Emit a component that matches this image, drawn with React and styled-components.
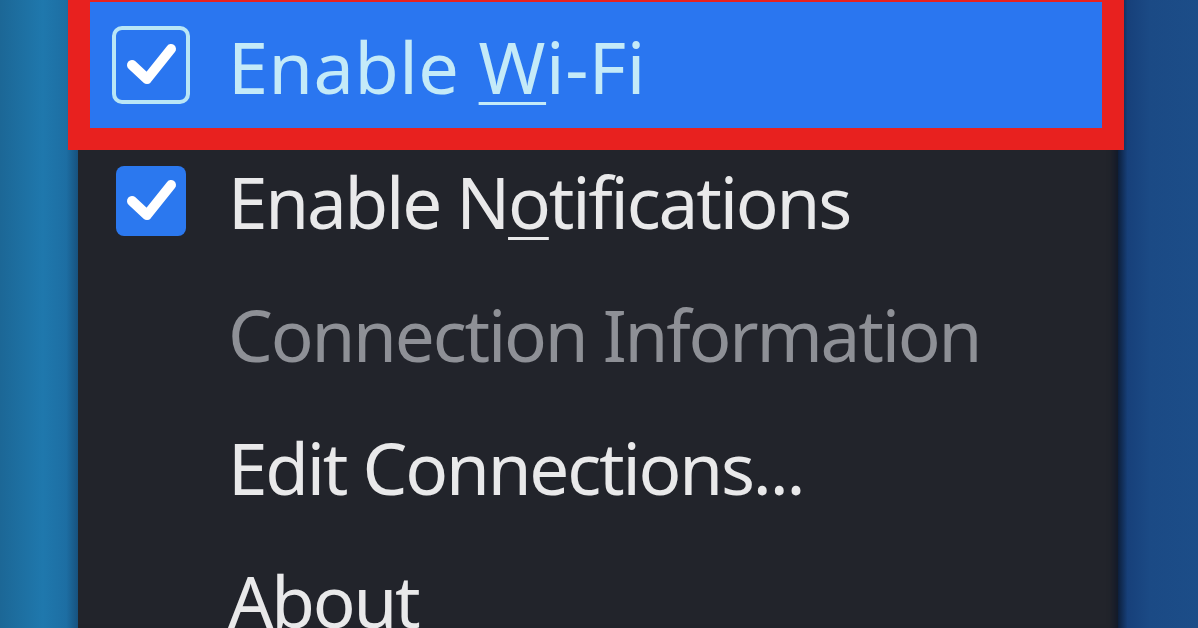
import styled, { createGlobalStyle } from 'styled-components'

const GlobalStyle = createGlobalStyle`
  html, body {
    margin: 0;
    padding: 0;
    background: #1b4a82;
  }
  body {
    font-family: 'Noto Sans', 'DejaVu Sans', sans-serif;
  }
`

const Screen = styled.div`
  display: flex;
  width: 1198px;
  height: 628px;
  overflow: hidden;
`

const Wallpaper = styled.div`
  flex: ${({ grow }) => (grow ? '1 1 0%' : '0 0 auto')};
  width: ${({ width }) => (width ? `${width}px` : 'auto')};
  background: ${({ side }) =>
    side === 'left'
      ? 'linear-gradient(90deg, #1c6796 0%, #1f78ad 55%, #1d6ea3 85%, #17527f 100%)'
      : 'linear-gradient(90deg, #0c1f3c 0%, #17407a 12%, #1b4a85 40%, #1c4d88 100%)'};
`

const Menu = styled.nav`
  position: relative;
  z-index: 1;
  width: 1040px;
  flex: 0 0 auto;
  display: flex;
  flex-direction: column;
  padding-top: 2px;
  background: #22242b;
  box-shadow: inset -8px 0 6px -4px #121a2a;
`

const Item = styled.div`
  display: flex;
  align-items: center;
  gap: 38px;
  flex: 0 0 auto;
  height: ${({ highlighted }) => (highlighted ? '126px' : '133px')};
  margin: ${({ highlighted }) => (highlighted ? '0 16px 6px 12px' : '0 16px 0 12px')};
  padding-left: 22px;
  background: ${({ highlighted }) => (highlighted ? '#2a76f0' : 'transparent')};
  outline: ${({ highlighted }) => (highlighted ? '22px solid #e8211f' : 'none')};
`

const CheckSlot = styled.div`
  width: 78px;
  height: 78px;
  flex: 0 0 auto;
  display: flex;
  align-items: center;
  justify-content: center;
`

const CheckBox = styled.div`
  box-sizing: border-box;
  width: ${({ outlined }) => (outlined ? '78px' : '70px')};
  height: ${({ outlined }) => (outlined ? '78px' : '70px')};
  border-radius: ${({ outlined }) => (outlined ? '10px' : '8px')};
  border: ${({ outlined }) => (outlined ? '4px solid #b9e6f6' : 'none')};
  background: ${({ outlined }) => (outlined ? 'transparent' : '#2b78ef')};
  display: flex;
  align-items: center;
  justify-content: center;

  svg {
    width: 62px;
    height: 62px;
  }
`

const Label = styled.span`
  font-size: ${({ tone }) => (tone === 'active' ? '72px' : '71px')};
  letter-spacing: ${({ tone }) => (tone === 'active' ? '0.5px' : '-2.2px')};
  line-height: 1;
  white-space: nowrap;
  color: ${({ tone }) =>
    tone === 'active' ? '#c4eaf8' : tone === 'disabled' ? '#8e9096' : '#e9e9ea'};
  padding-top: 2px;

  u {
    text-decoration-thickness: 3px;
    text-underline-offset: 8px;
  }
`

function Check({ outlined }) {
  return (
    <CheckBox outlined={outlined}>
      <svg viewBox="0 0 62 62">
        <path
          d="M12 31 L27 45 L51 15"
          fill="none"
          stroke="#ffffff"
          strokeWidth="10"
          strokeLinecap="round"
          strokeLinejoin="round"
        />
      </svg>
    </CheckBox>
  )
}

export default function App() {
  return (
    <>
      <GlobalStyle />
      <Screen>
        <Wallpaper side="left" width={78} />
        <Menu>
          <Item highlighted>
            <CheckSlot>
              <Check outlined />
            </CheckSlot>
            <Label tone="active">
              Enable <u>W</u>i-Fi
            </Label>
          </Item>
          <Item>
            <CheckSlot>
              <Check />
            </CheckSlot>
            <Label>
              Enable N<u>o</u>tifications
            </Label>
          </Item>
          <Item>
            <CheckSlot />
            <Label tone="disabled">Connection Information</Label>
          </Item>
          <Item>
            <CheckSlot />
            <Label>Edit Connections...</Label>
          </Item>
          <Item>
            <CheckSlot />
            <Label>About</Label>
          </Item>
        </Menu>
        <Wallpaper side="right" grow />
      </Screen>
    </>
  )
}
